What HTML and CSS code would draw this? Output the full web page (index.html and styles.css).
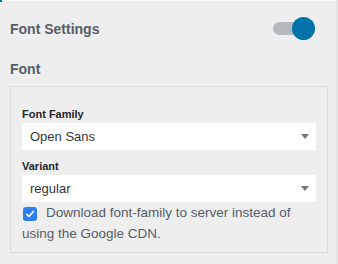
FILE: index.html
```html
<!DOCTYPE html>
<html>
<head>
    <title>Font Settings</title>
    <link rel="stylesheet" href="styles.css">
</head>
<body>

<div class="top-edge"><span class="tab-mark"></span></div>

<div class="panel">
    <div class="panel-head">
        <h2>Font Settings</h2>
        <label class="toggle">
            <span class="track"></span>
            <span class="knob"></span>
        </label>
    </div>

    <h3>Font</h3>

    <div class="font-box">
        <label class="field-label">Font Family</label>
        <div class="select">
            <span>Open Sans</span>
            <span class="arrow"></span>
        </div>

        <label class="field-label">Variant</label>
        <div class="select">
            <span>regular</span>
            <span class="arrow"></span>
        </div>

        <p class="check-row">
            <span class="checkbox">
                <svg width="10" height="10" viewBox="0 0 10 10"><path d="M1.8 5.2 L4 7.4 L8.3 2.4" fill="none" stroke="#fff" stroke-width="1.6" stroke-linecap="round" stroke-linejoin="round"/></svg>
            </span>Download font-family to server instead of using the Google CDN.
        </p>
    </div>
</div>

</body>
</html>
```

FILE: styles.css
```css
body {
    margin: 0;
    background-color: #eeeeee;
    font-family: "Liberation Sans", Arial, sans-serif;
    width: 338px;
    height: 264px;
    overflow: hidden;
    border-right: 2px solid #e4e4e4;
    box-sizing: border-box;
}
.top-edge {
    height: 1px;
    background-color: #f8f8f8;
    position: relative;
}
.tab-mark {
    position: absolute;
    left: 0;
    top: 0;
    width: 2px;
    height: 2px;
    background-color: #0073aa;
}
.panel {
    padding: 0 8px 0 10px;
}
.panel-head {
    display: flex;
    align-items: center;
    justify-content: space-between;
    height: 56px;
}
h2 {
    margin: 0;
    font-size: 14px;
    font-weight: bold;
    color: #555d66;
}
.toggle {
    position: relative;
    width: 44px;
    height: 22px;
    margin-right: 12px;
}
.track {
    position: absolute;
    left: 1px;
    top: 4px;
    width: 36px;
    height: 13px;
    border-radius: 7px;
    background-color: #b4b9be;
}
.knob {
    position: absolute;
    left: 20px;
    top: -1px;
    width: 23px;
    height: 23px;
    border-radius: 50%;
    background-color: #0073aa;
}
h3 {
    margin: 4px 0 9px 0;
    font-size: 14px;
    font-weight: bold;
    color: #555d66;
}
.font-box {
    border: 1px solid #dcdcdc;
    padding: 21px 11px 8px 11px;
}
.field-label {
    display: block;
    font-size: 11px;
    font-weight: bold;
    color: #23282d;
    margin-bottom: 3px;
}
.select {
    display: flex;
    align-items: center;
    justify-content: space-between;
    height: 27px;
    background-color: #ffffff;
    padding: 0 7px 0 8px;
    margin-bottom: 10px;
    font-size: 13px;
    color: #32373c;
}
.arrow {
    width: 0;
    height: 0;
    border-left: 4px solid transparent;
    border-right: 4px solid transparent;
    border-top: 5px solid #777;
}
.check-row {
    margin: -10px 0 0 0;
    font-size: 13.5px;
    line-height: 21px;
    color: #555d66;
}
.checkbox {
    display: inline-flex;
    align-items: center;
    justify-content: center;
    width: 14px;
    height: 14px;
    border-radius: 3px;
    background-color: #2f7ff0;
    vertical-align: -2px;
    margin: 0 9px 0 1px;
}
```
